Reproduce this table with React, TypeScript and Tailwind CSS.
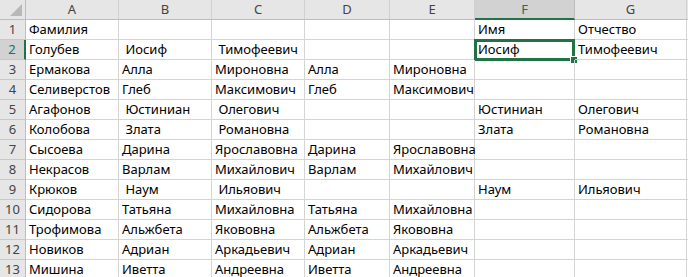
import React from "react";

const cols = ["A", "B", "C", "D", "E", "F", "G", ""];
const widths = [26, 93, 93, 93, 85, 85, 100, 112, 60];

const rows: string[][] = [
  ["Фамилия", "", "", "", "", "Имя", "Отчество"],
  ["Голубев", " Иосиф", " Тимофеевич", "", "", "Иосиф", "Тимофеевич"],
  ["Ермакова", "Алла", "Мироновна", "Алла", "Мироновна", "", ""],
  ["Селиверстов", "Глеб", "Максимович", "Глеб", "Максимович", "", ""],
  ["Агафонов", " Юстиниан", " Олегович", "", "", "Юстиниан", "Олегович"],
  ["Колобова", " Злата", " Романовна", "", "", "Злата", "Романовна"],
  ["Сысоева", "Дарина", "Ярославовна", "Дарина", "Ярославовна", "", ""],
  ["Некрасов", "Варлам", "Михайлович", "Варлам", "Михайлович", "", ""],
  ["Крюков", " Наум", " Ильяович", "", "", "Наум", "Ильяович"],
  ["Сидорова", "Татьяна", "Михайловна", "Татьяна", "Михайловна", "", ""],
  ["Трофимова", "Альжбета", "Якововна", "Альжбета", "Якововна", "", ""],
  ["Новиков", "Адриан", "Аркадьевич", "Адриан", "Аркадьевич", "", ""],
  ["Мишина", "Иветта", "Андреевна", "Иветта", "Андреевна", "", ""],
];

export default function App() {
  const template = widths.map((w) => `${w}px`).join(" ");
  return (
    <div
      className="w-[688px] h-[277px] overflow-hidden bg-white text-[13px] text-black"
      style={{ fontFamily: '"Noto Sans", "Open Sans", sans-serif' }}
    >
      <div className="grid" style={{ gridTemplateColumns: template }}>
        {/* header row */}
        <div className="relative h-[20px] bg-[#e6e6e6] border-r border-b border-[#bdbdbd]">
          <svg className="absolute right-[3px] bottom-[3px]" width="12" height="12" viewBox="0 0 12 12">
            <polygon points="12,0 12,12 0,12" fill="#b8b8b8" />
          </svg>
        </div>
        {cols.map((c, k) => {
          const active = c === "F";
          return (
            <div
              key={k}
              className={
                active
                  ? "h-[20px] flex items-center justify-center bg-[#d2d2d2] border-r border-[#bdbdbd] border-b-2 border-b-[#217346] text-[#217346] leading-none"
                  : "h-[20px] flex items-center justify-center bg-[#e6e6e6] border-r border-b border-[#d0d0d0] border-b-[#bdbdbd] text-[#444] leading-none"
              }
            >
              {c}
            </div>
          );
        })}
        {rows.map((r, i) => {
          const active = i === 1;
          return (
            <React.Fragment key={i}>
              <div
                className={
                  active
                    ? "h-[20px] flex items-center justify-center bg-[#d2d2d2] border-b border-[#c8c8c8] border-r-2 border-r-[#217346] text-[#217346] leading-none"
                    : "h-[20px] flex items-center justify-center bg-[#e6e6e6] border-b border-r border-[#c8c8c8] border-r-[#bdbdbd] text-[#444] leading-none"
                }
              >
                {i + 1}
              </div>
              {[...r, ""].map((v, j) => {
                const sel = active && j === 5;
                return (
                  <div
                    key={j}
                    className="relative h-[20px] border-r border-b border-[#d4d4d4] pl-[3px] flex items-end pb-[1px] whitespace-pre leading-[17px] overflow-visible"
                  >
                    {v}
                    {sel && (
                      <>
                        <div className="absolute left-[-1px] top-[-1px] right-[-1px] bottom-[-2px] border-[3px] border-[#217346] pointer-events-none" />
                        <div className="absolute right-[-4px] bottom-[-5px] w-[8px] h-[8px] bg-[#217346] border border-white" />
                      </>
                    )}
                  </div>
                );
              })}
            </React.Fragment>
          );
        })}
      </div>
    </div>
  );
}
